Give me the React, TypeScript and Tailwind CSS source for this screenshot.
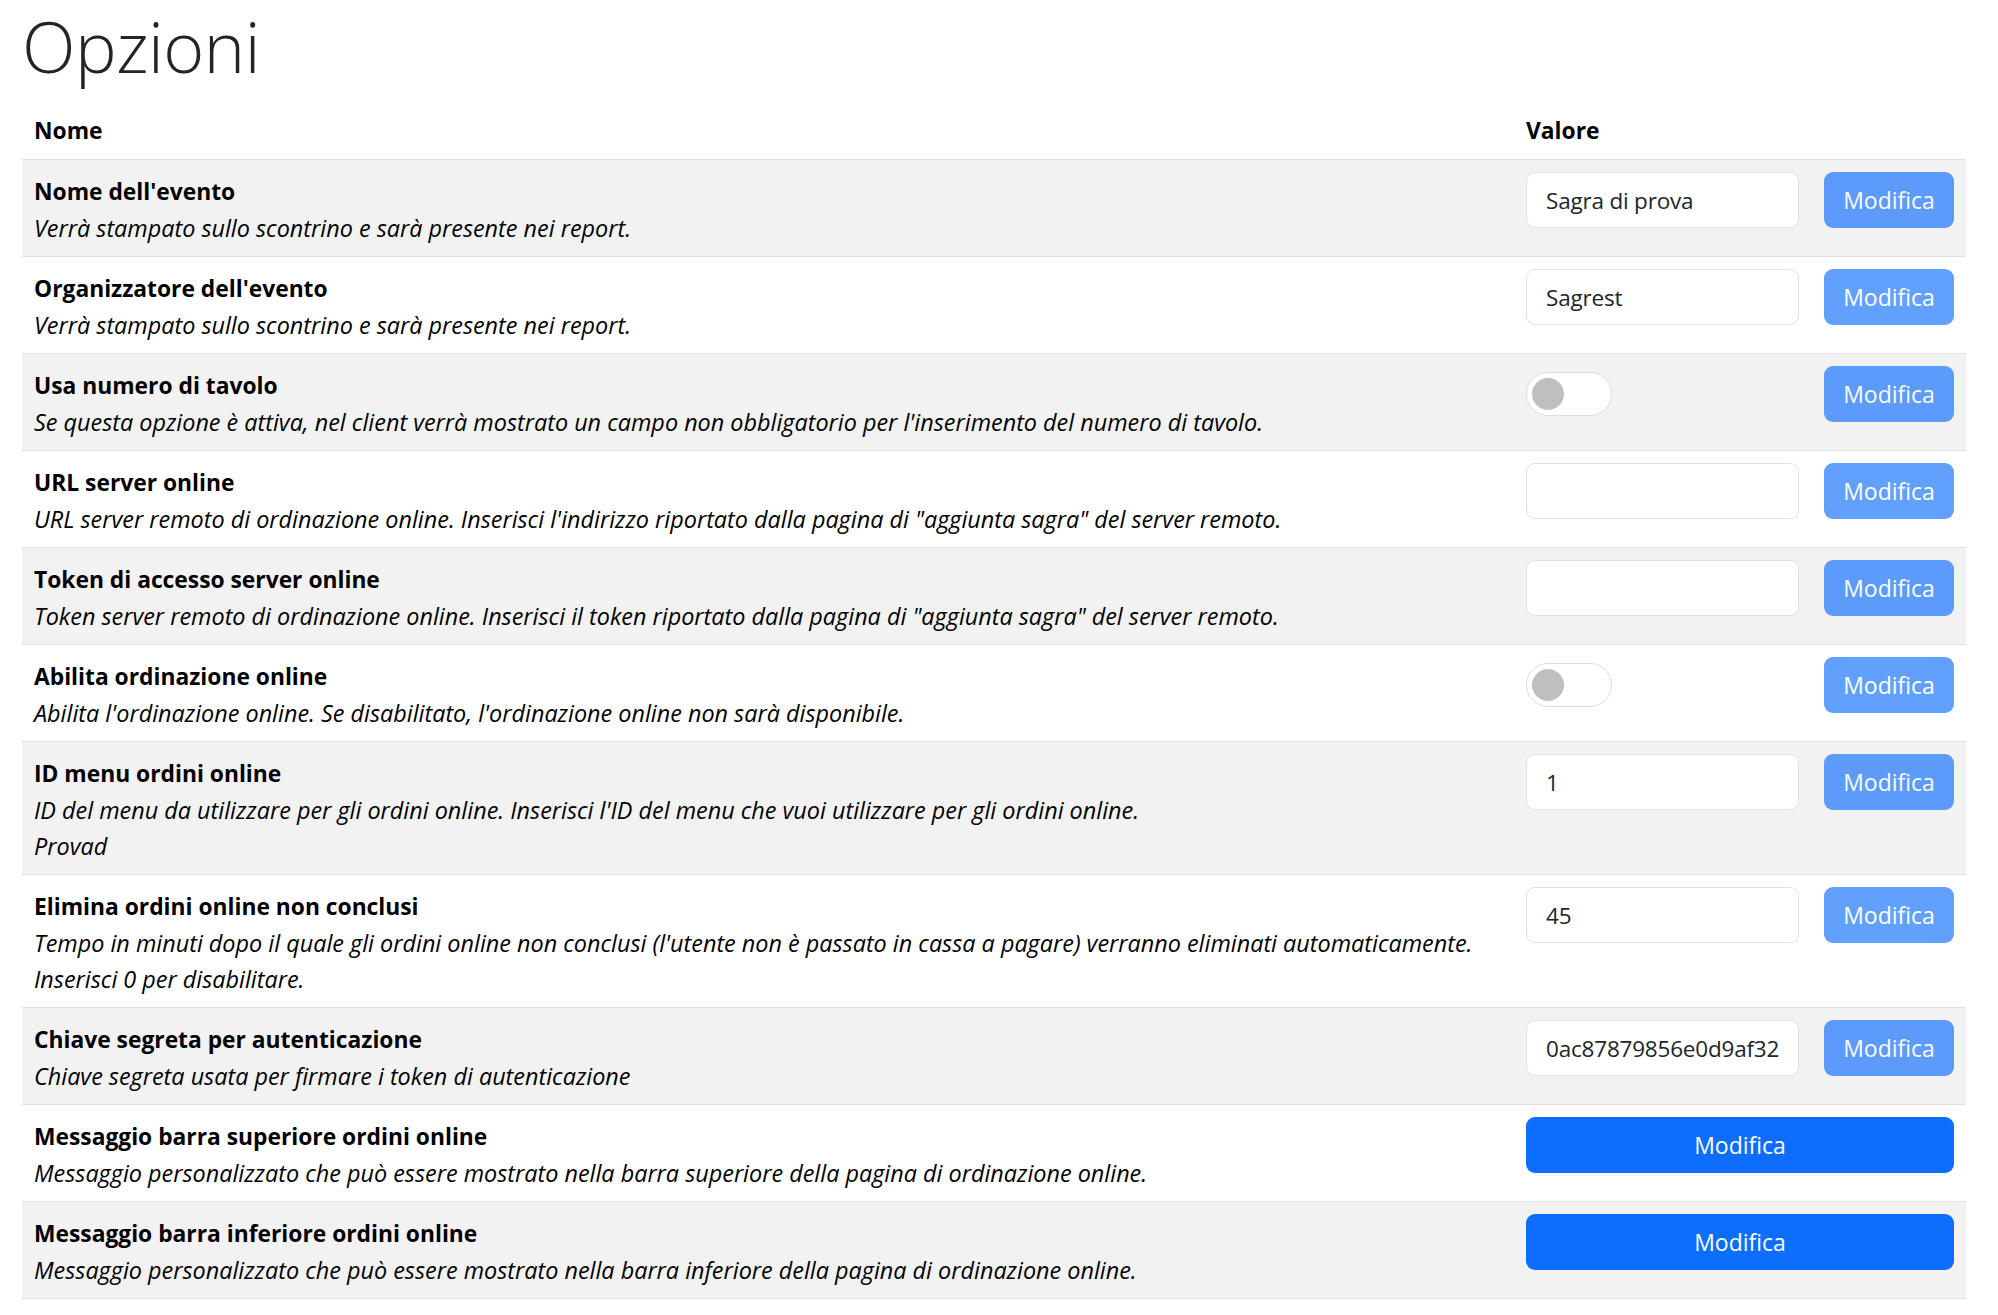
import React from "react";

type Row = {
  name: string;
  desc: string[];
  kind: "input" | "toggle" | "wide";
  value?: string;
};

const rows: Row[] = [
  { name: "Nome dell'evento", desc: ["Verrà stampato sullo scontrino e sarà presente nei report."], kind: "input", value: "Sagra di prova" },
  { name: "Organizzatore dell'evento", desc: ["Verrà stampato sullo scontrino e sarà presente nei report."], kind: "input", value: "Sagrest" },
  { name: "Usa numero di tavolo", desc: ["Se questa opzione è attiva, nel client verrà mostrato un campo non obbligatorio per l'inserimento del numero di tavolo."], kind: "toggle" },
  { name: "URL server online", desc: ["URL server remoto di ordinazione online. Inserisci l'indirizzo riportato dalla pagina di \"aggiunta sagra\" del server remoto."], kind: "input", value: "" },
  { name: "Token di accesso server online", desc: ["Token server remoto di ordinazione online. Inserisci il token riportato dalla pagina di \"aggiunta sagra\" del server remoto."], kind: "input", value: "" },
  { name: "Abilita ordinazione online", desc: ["Abilita l'ordinazione online. Se disabilitato, l'ordinazione online non sarà disponibile."], kind: "toggle" },
  { name: "ID menu ordini online", desc: ["ID del menu da utilizzare per gli ordini online. Inserisci l'ID del menu che vuoi utilizzare per gli ordini online.", "Provad"], kind: "input", value: "1" },
  { name: "Elimina ordini online non conclusi", desc: ["Tempo in minuti dopo il quale gli ordini online non conclusi (l'utente non è passato in cassa a pagare) verranno eliminati automaticamente.", "Inserisci 0 per disabilitare."], kind: "input", value: "45" },
  { name: "Chiave segreta per autenticazione", desc: ["Chiave segreta usata per firmare i token di autenticazione"], kind: "input", value: "0ac87879856e0d9af32" },
  { name: "Messaggio barra superiore ordini online", desc: ["Messaggio personalizzato che può essere mostrato nella barra superiore della pagina di ordinazione online."], kind: "wide" },
  { name: "Messaggio barra inferiore ordini online", desc: ["Messaggio personalizzato che può essere mostrato nella barra inferiore della pagina di ordinazione online."], kind: "wide" },
];

function Toggle() {
  return (
    <div className="w-[273px] h-[56px] flex items-center">
      <div className="w-[86px] h-[44px] rounded-full border border-[#dcdde3] bg-white flex items-center pl-[5px]">
        <div className="w-[32px] h-[32px] rounded-full bg-[#bfbfbf]" />
      </div>
    </div>
  );
}

function SmallButton() {
  return (
    <button className="w-[130px] h-[56px] rounded-[9px] bg-[#0d6efd] opacity-65 text-white text-[23px] leading-[34px]">
      Modifica
    </button>
  );
}

export default function App() {
  return (
    <div
      className="bg-white min-h-[1315px] pl-[22px] pr-[32px] text-black"
      style={{ fontFamily: '"Open Sans", "Noto Sans", sans-serif' }}
    >
      <h1 className="text-[70px] leading-[84px] pt-[4px] font-light text-[#212529] mb-[11px] tracking-[-0.5px]">Opzioni</h1>
      <div className="text-[22.8px] leading-[36px]">
        <div className="flex border-b border-[#dee2e6]">
          <div className="flex-1 px-[12px] pt-[14px] pb-[10px] font-bold">Nome</div>
          <div className="w-[452px] px-[12px] pt-[14px] pb-[10px] font-bold">Valore</div>
        </div>
        {rows.map((r, i) => (
          <div
            key={i}
            className={`flex border-b border-[#dee2e6] ${i % 2 === 0 ? "bg-[#f2f2f2]" : "bg-white"}`}
          >
            <div className="flex-1 min-w-0 px-[12px] pt-[14px] pb-[10px]">
              <div className="font-bold whitespace-nowrap">{r.name}</div>
              {r.desc.map((d, j) => (
                <div key={j} className="italic whitespace-nowrap text-[23.4px]">
                  {d}
                </div>
              ))}
            </div>
            <div className="w-[452px] px-[12px] pt-[12px] pb-[12px]">
              {r.kind === "wide" ? (
                <button className="w-full h-[56px] rounded-[9px] bg-[#0d6efd] text-white text-[23px] leading-[34px]">
                  Modifica
                </button>
              ) : (
                <div className="flex items-center gap-[25px]">
                  {r.kind === "toggle" ? (
                    <Toggle />
                  ) : (
                    <input
                      readOnly
                      value={r.value}
                      className="w-[273px] h-[56px] rounded-[9px] border border-[#dee2e6] bg-white pl-[19px] pr-[8px] text-[22.5px] tracking-[-0.2px] text-[#212529] outline-none"
                      style={{ fontFamily: '"Open Sans", "Noto Sans", sans-serif' }}
                    />
                  )}
                  <SmallButton />
                </div>
              )}
            </div>
          </div>
        ))}
      </div>
    </div>
  );
}
